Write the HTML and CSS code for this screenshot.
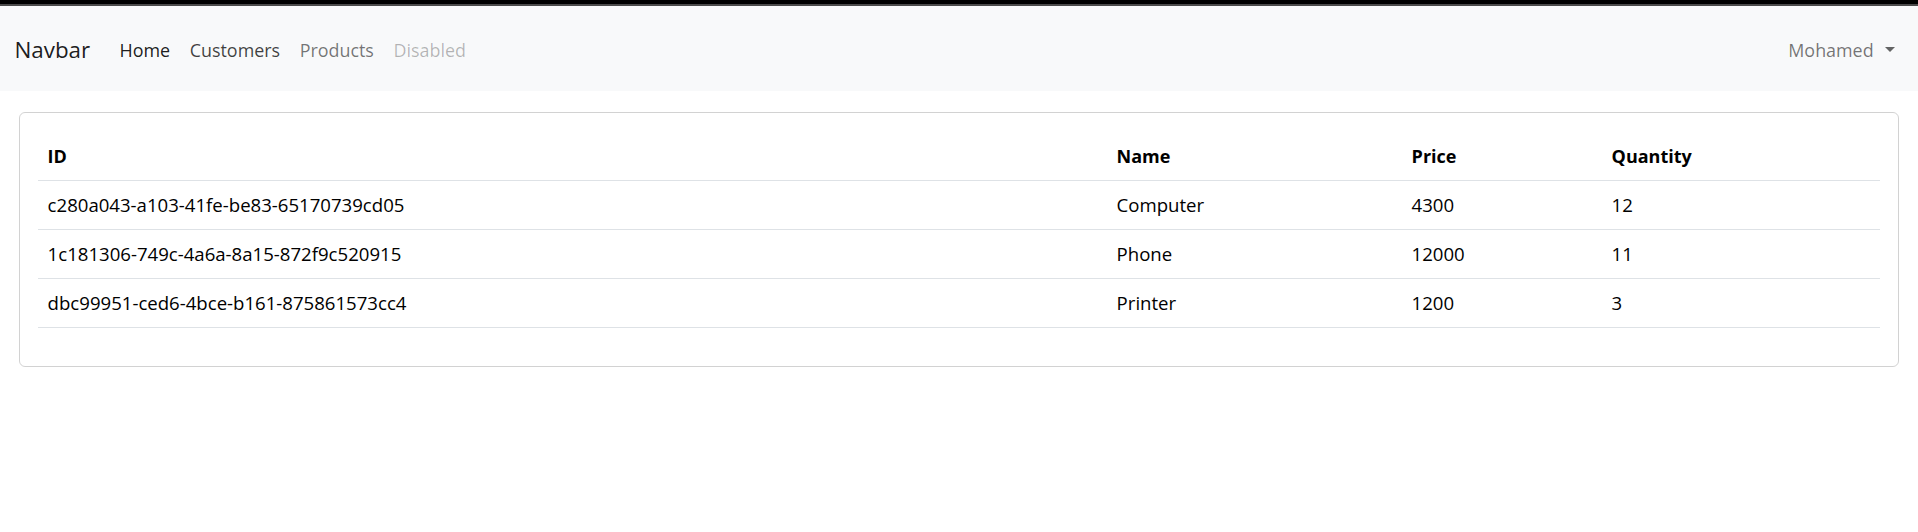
FILE: index.html
```html
<!DOCTYPE html>
<html lang="en">
<head>
<meta charset="utf-8">
<title>Products</title>
<link rel="stylesheet" href="styles.css">
</head>
<body>
<div class="topbar"></div>
<nav class="navbar">
  <a class="brand" href="#">Navbar</a>
  <ul class="nav-links">
    <li><a class="nav-link active" href="#">Home</a></li>
    <li><a class="nav-link semi" href="#">Customers</a></li>
    <li><a class="nav-link" href="#">Products</a></li>
    <li><a class="nav-link disabled" href="#">Disabled</a></li>
  </ul>
  <div class="user">
    <a class="nav-link dropdown" href="#">Mohamed<span class="caret"></span></a>
  </div>
</nav>
<main class="page">
  <div class="card">
    <table class="table">
      <thead>
        <tr><th class="c-id">ID</th><th class="c-name">Name</th><th class="c-price">Price</th><th class="c-qty">Quantity</th></tr>
      </thead>
      <tbody>
        <tr><td>c280a043-a103-41fe-be83-65170739cd05</td><td>Computer</td><td>4300</td><td>12</td></tr>
        <tr><td>1c181306-749c-4a6a-8a15-872f9c520915</td><td>Phone</td><td>12000</td><td>11</td></tr>
        <tr><td>dbc99951-ced6-4bce-b161-875861573cc4</td><td>Printer</td><td>1200</td><td>3</td></tr>
      </tbody>
    </table>
  </div>
</main>
</body>
</html>
```
FILE: styles.css
```css
* { box-sizing: border-box; }
html, body { margin: 0; padding: 0; }
body {
  font-family: "Open Sans", "Noto Sans", sans-serif;
  font-size: 18.6px;
  line-height: 28.8px;
  color: #212529;
  background: #fff;
}
.topbar {
  height: 6px;
  background: #000;
  border-bottom: 2px solid #4a4a4a;
}
.navbar {
  display: flex;
  align-items: center;
  background: #f8f9fa;
  height: 85px;
  padding: 3px 14.4px 0;
}
.brand {
  font-size: 22.4px;
  line-height: 36px;
  color: rgba(0,0,0,.9);
  text-decoration: none;
  margin-right: 19.6px;
}
.nav-links {
  display: flex;
  list-style: none;
  margin: 0;
  padding: 0;
}
.nav-link {
  display: block;
  font-size: 17.9px;
  padding: 9.6px 9.8px;
  color: rgba(0,0,0,.55);
  text-decoration: none;
}
.nav-link.active { color: rgba(0,0,0,.9); }
.nav-link.semi { color: rgba(0,0,0,.75); }
.nav-link.disabled { color: rgba(0,0,0,.28); }
.user { margin-left: auto; }
.dropdown { display: flex; align-items: center; padding-right: 9px; }
.caret {
  display: inline-block;
  margin-left: 11px;
  width: 0; height: 0;
  border-top: 5.8px solid rgba(0,0,0,.6);
  border-left: 5.8px solid transparent;
  border-right: 5.8px solid transparent;
}
.page { padding: 21px 19px 0; }
.card {
  border: 1px solid rgba(0,0,0,.175);
  border-radius: 6px;
  padding: 18px 18px 19px;
}
.table {
  width: 100%;
  border-collapse: collapse;
  margin-bottom: 19.2px;
  color: #000;
}
.table th, .table td {
  text-align: left;
  padding: 10.6px 9.6px 8.6px;
  border-bottom: 1px solid #dee2e6;
  height: 49px;
  vertical-align: middle;
}
.table th { font-weight: 700; font-size: 18px; }
.c-id { width: 1069px; }
.c-name { width: 295px; }
.c-price { width: 200px; }
```
